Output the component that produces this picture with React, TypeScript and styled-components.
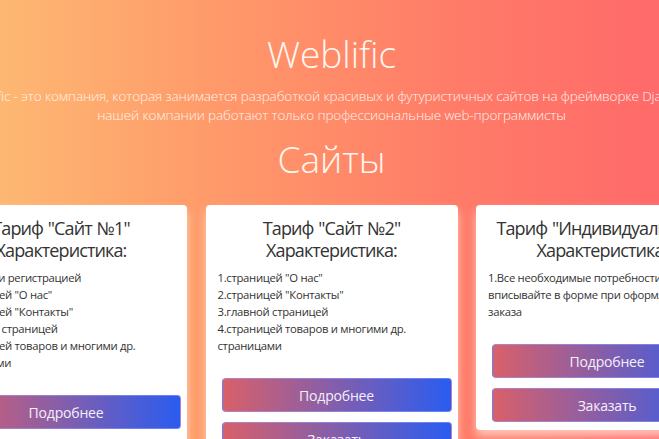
import React from "react";
import styled, { createGlobalStyle } from "styled-components";

const GlobalStyle = createGlobalStyle`
  html, body {
    margin: 0;
    padding: 0;
    overflow: hidden;
  }
  body {
    width: 659px;
    height: 439px;
    background: linear-gradient(90deg, #fdb873 0%, #ff9a6a 32%, #ff7b68 70%, #ff6a6a 100%);
    font-family: "Open Sans", "Noto Sans", sans-serif;
  }
`;

const Page = styled.div`
  width: 793px;
  margin-left: -65px;
  display: flex;
  flex-direction: column;
  align-items: center;
  padding-top: 30px;
`;

const Brand = styled.h1`
  margin: 0;
  font-weight: 300;
  font-size: 37px;
  line-height: 48px;
  color: #fff7f0;
`;

const Lead = styled.p`
  margin: 9px 0 0;
  width: 793px;
  text-align: center;
  font-weight: 300;
  font-size: 13.5px;
  line-height: 19px;
  letter-spacing: -0.1px;
  color: #fff3ea;
  white-space: nowrap;
`;

const Section = styled.h2`
  margin: 10px 0 0;
  font-weight: 300;
  font-size: 37px;
  line-height: 48px;
  color: #fff7f0;
`;

const Cards = styled.div`
  margin-top: 22px;
  display: grid;
  grid-template-columns: repeat(3, 252px);
  column-gap: 18.5px;
  align-items: start;
`;

const Card = styled.div`
  background: #fff;
  border-radius: 4px;
  padding: 12px 12px 8px;
  box-shadow: 0 6px 10px rgba(255, 235, 220, 0.7);
  color: #333;
`;

const CardTitle = styled.h3`
  margin: 0;
  text-align: center;
  font-weight: 400;
  font-size: 18px;
  line-height: 22px;
  letter-spacing: -0.9px;
  word-spacing: 1px;
`;

const Features = styled.ul`
  list-style: none;
  margin: 8px 0 0;
  padding: 0;
  font-size: 11.3px;
  line-height: 17px;
  letter-spacing: -0.3px;
`;

const Actions = styled.div`
  margin-top: 24px;
  display: flex;
  flex-direction: column;
  gap: 10px;
  padding-left: 4px;
`;

const GradientButton = styled.button`
  width: 230px;
  height: 34px;
  border: 1px solid rgba(150, 160, 255, 0.55);
  border-radius: 4px;
  background: linear-gradient(90deg, #d9606a 0%, #2a5cf0 100%);
  color: #f7eff8;
  font-family: "Open Sans", "Noto Sans", sans-serif;
  font-size: 14px;
  font-weight: 500;
  letter-spacing: -0.2px;
  cursor: pointer;
`;

type Plan = {
  title: string;
  items: string[];
  buttons: string[];
};

const plans: Plan[] = [
  {
    title: 'Тариф "Сайт №1"',
    items: [
      "1.Входом и регистрацией",
      '2.страницей "О нас"',
      '3.страницей "Контакты"',
      "4.главной страницей",
      "5.страницей товаров и многими др. страницами",
    ],
    buttons: ["Подробнее", "Заказать"],
  },
  {
    title: 'Тариф "Сайт №2"',
    items: [
      '1.страницей "О нас"',
      '2.страницей "Контакты"',
      "3.главной страницей",
      "4.страницей товаров и многими др. страницами",
    ],
    buttons: ["Подробнее", "Заказать"],
  },
  {
    title: 'Тариф "Индивидуальный"',
    items: [
      "1.Все необходимые потребности сайта вписывайте в форме при оформлении заказа",
    ],
    buttons: ["Подробнее", "Заказать"],
  },
];

export default function App() {
  return (
    <>
      <GlobalStyle />
      <Page>
        <Brand>Weblific</Brand>
        <Lead>
          Weblific - это компания, которая занимается разработкой красивых и
          футуристичных сайтов на фреймворке Django. В
          <br />
          нашей компании работают только профессиональные web-программисты
        </Lead>
        <Section>Сайты</Section>
        <Cards>
          {plans.map((p) => (
            <Card key={p.title}>
              <CardTitle>
                {p.title}
                <br />
                Характеристика:
              </CardTitle>
              <Features>
                {p.items.map((it) => (
                  <li key={it}>{it}</li>
                ))}
              </Features>
              <Actions>
                {p.buttons.map((b) => (
                  <GradientButton key={b}>{b}</GradientButton>
                ))}
              </Actions>
            </Card>
          ))}
        </Cards>
      </Page>
    </>
  );
}
